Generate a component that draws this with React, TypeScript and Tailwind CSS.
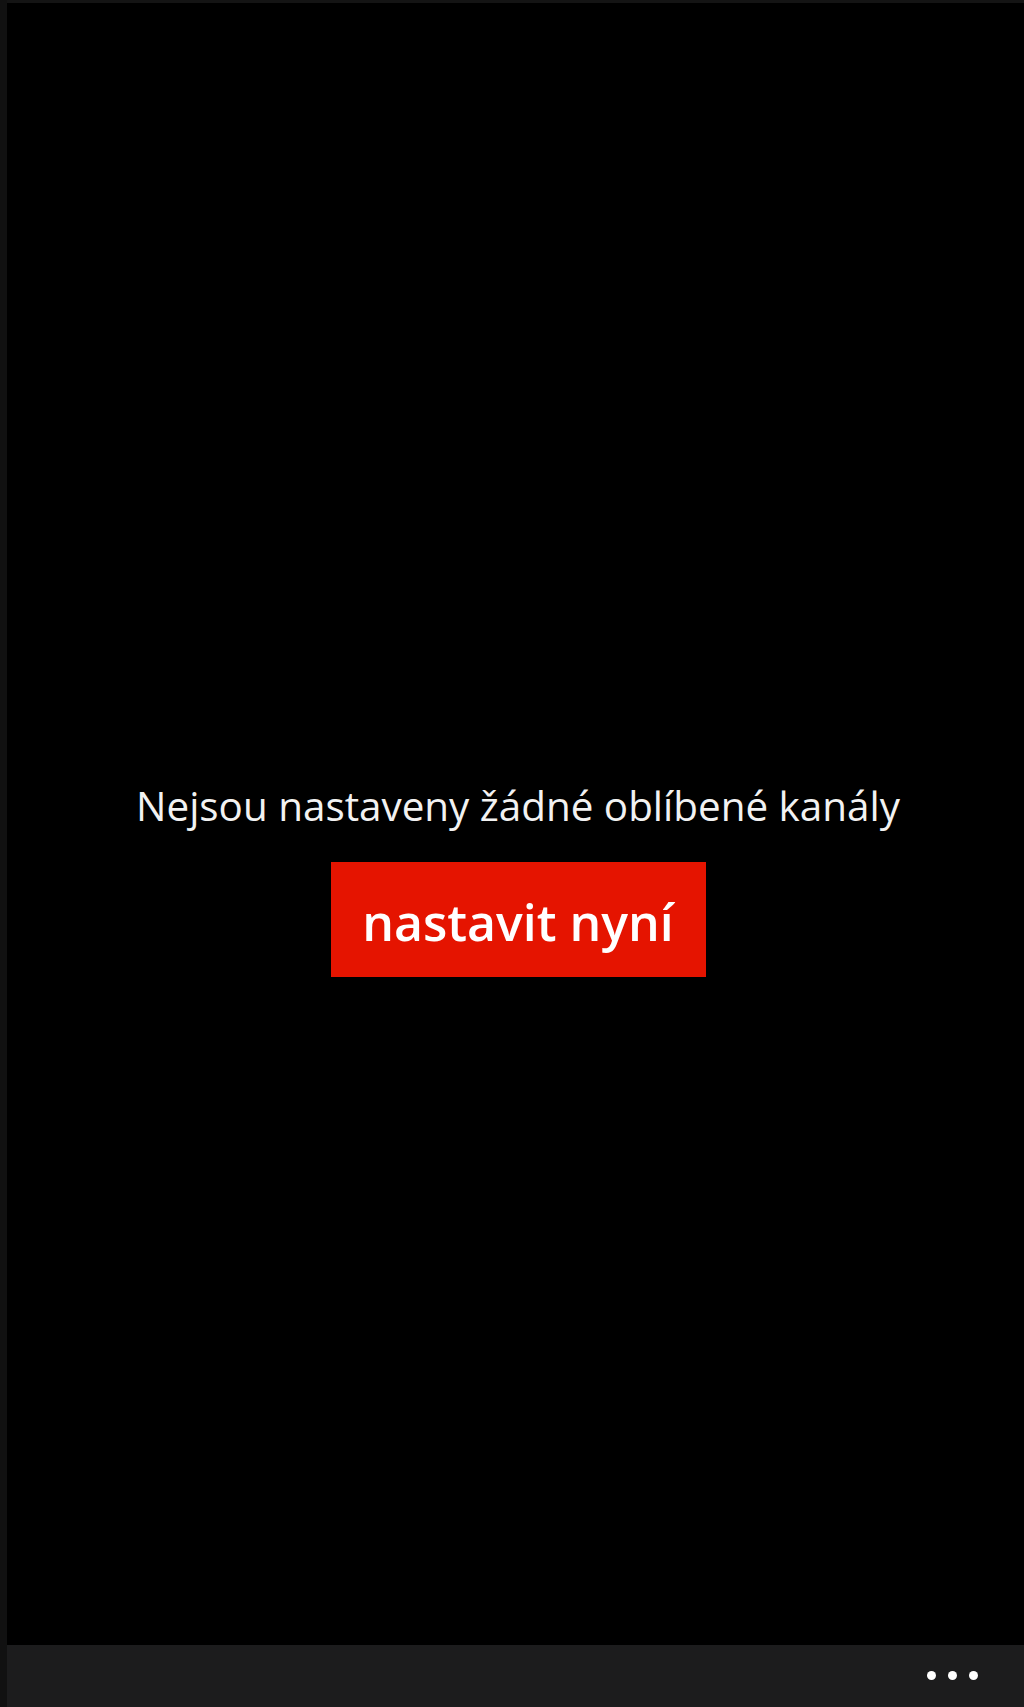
export default function App() {
  return (
    <div className="flex h-[1707px] w-[1024px] bg-black text-white" style={{ fontFamily: '"Open Sans", "Noto Sans", sans-serif' }}>
      {/* linker rand */}
      <div className="w-[7px] shrink-0 bg-[#111111]" />

      <div className="flex flex-1 flex-col">
        <div className="h-[3px] bg-[#141414]" />

        {/* lege staat */}
        <div className="flex flex-1 flex-col items-center pl-[5px] pt-[777px]">
          <p className="text-[40.4px] leading-[52px] text-[#f2f2f2]">Nejsou nastaveny žádné oblíbené kanály</p>
          <button className="mt-[30px] flex h-[115px] w-[375px] items-center justify-center bg-[#e51400] pt-[6px] text-[50px] font-semibold text-white">
            nastavit nyní
          </button>
        </div>

        {/* app bar */}
        <div className="flex h-[62px] items-start justify-end bg-[#1c1c1d] pr-[46px] pt-[26px]">
          <div className="flex gap-[12px]">
            <span className="h-[9px] w-[9px] rounded-full bg-white" />
            <span className="h-[9px] w-[9px] rounded-full bg-white" />
            <span className="h-[9px] w-[9px] rounded-full bg-white" />
          </div>
        </div>
      </div>
    </div>
  );
}
